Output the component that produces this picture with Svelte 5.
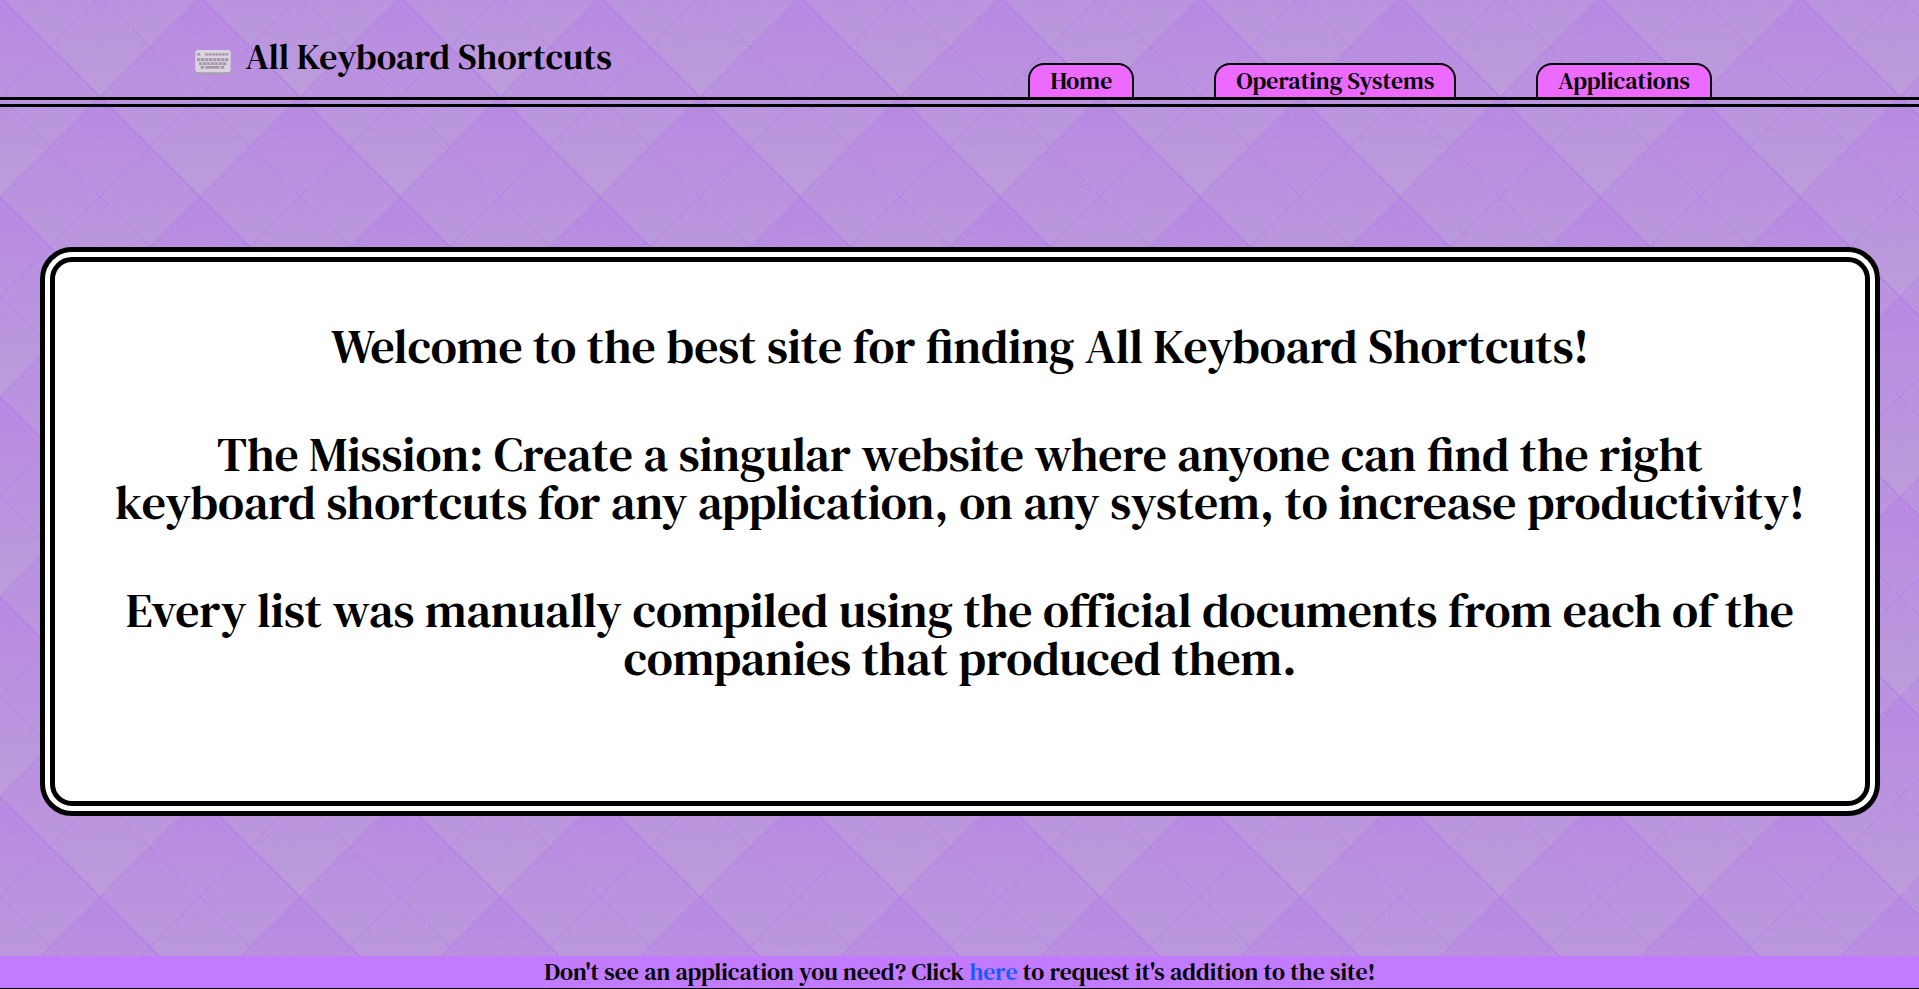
<script>
  const tabs = ['Home', 'Operating Systems', 'Applications'];
  const row = (y, h, start, end, count) => {
    const step = (end - start) / count;
    return Array.from({ length: count }, (_, i) => ({ x: start + i * step + 0.35, y, w: step - 0.7, h }));
  };
  const keys = [
    { x: 2.2, y: 3.2, w: 3, h: 2.4 },
    ...row(3.2, 2.4, 9.8, 33.6, 7),
    ...row(8.2, 2.9, 1.8, 33.8, 8),
    ...row(12.3, 2.8, 3.6, 31.6, 7),
    { x: 5.6, y: 16, w: 3.4, h: 2.7 },
    { x: 10.2, y: 16, w: 14.4, h: 2.7 },
    { x: 25.8, y: 16, w: 3.4, h: 2.7 }
  ];
  const tones = [
    { id: 'deep', from: '#b888e4', to: '#bb93df', at: [[0, 0], [200, 0], [100, 100]] },
    { id: 'mid', from: '#b98de2', to: '#bb98dd', at: [[50, 50], [150, 50], [50, 150], [150, 150], [50, -50], [150, -50]] },
    { id: 'pale', from: '#ba91e0', to: '#bc9cdb', at: [[100, 0], [0, 100], [200, 100], [0, -100], [200, -100]] }
  ];
  const diamond = ([x, y]) => `M${x} ${y}l50 50l-50 50l-50 -50z`;
</script>

<div class="page">
  <svg class="argyle" aria-hidden="true">
    <defs>
      {#each tones as t}
        <linearGradient id={t.id} x1="0" y1="0" x2="0" y2="1">
          <stop offset="0" stop-color={t.from} />
          <stop offset="1" stop-color={t.to} />
        </linearGradient>
      {/each}
      <pattern id="tile" width="200" height="200" patternUnits="userSpaceOnUse" patternTransform="translate(0 -3)">
        <rect width="200" height="200" fill="#bb93e0" />
        {#each tones as t}
          {#each t.at as p}<path d={diamond(p)} fill="url(#{t.id})" />{/each}
        {/each}
        <path d="M-10 110L110 -10M-10 210L210 -10M90 210L210 90M90 -10L210 110M-10 90L110 210" stroke="#b37be9" stroke-width="1" stroke-opacity=".8" fill="none" />
        <path d="M-10 -10L210 210" stroke="#b37be9" stroke-width="1.8" stroke-opacity=".8" />
      </pattern>
      <filter id="grain" x="0" y="0" width="100%" height="100%">
        <feTurbulence type="fractalNoise" baseFrequency=".55" numOctaves="2" seed="4" />
        <feColorMatrix values="0 0 0 0 .5  0 0 0 0 .5  0 0 0 0 .5  1.4 0 0 0 -.62" />
      </filter>
    </defs>
    <rect width="100%" height="100%" fill="url(#tile)" />
    <rect width="100%" height="100%" filter="url(#grain)" opacity=".2" />
  </svg>
  <header>
    <div class="brand">
      <svg class="keyboard" viewBox="0 0 36 25" aria-hidden="true">
        <rect x=".3" y="1" width="35.4" height="23.6" rx="2.4" fill="#a99bb4" />
        <rect x=".3" y="0" width="35.4" height="22.2" rx="2.4" fill="#dcd3e1" />
        {#each keys as k}<rect x={k.x} y={k.y} width={k.w} height={k.h} fill="#a198a8" />{/each}
      </svg>
      <span class="title">All Keyboard Shortcuts</span>
    </div>
    <nav>{#each tabs as t}<a class="tab">{t}</a>{/each}</nav>
  </header>
  <main>
    <section>
      <p>Welcome to the best site for finding All Keyboard Shortcuts!</p>
      <p>The Mission: Create a singular website where anyone can find the right<br />keyboard shortcuts for any application, on any system, to increase productivity!</p>
      <p>Every list was manually compiled using the official documents from each of the<br />companies that produced them.</p>
    </section>
  </main>
  <footer>Don't see an application you need? Click <a>here</a> to request it's addition to the site!</footer>
</div>

<style>
  :global(body) { background: #bb93e0; }
  .page { position: relative; isolation: isolate; height: 989px; display: flex; flex-direction: column; color: #000; font-family: 'DM Serif Text', 'Liberation Serif', serif; overflow: hidden; }
  .argyle { position: absolute; inset: 0; width: 100%; height: 100%; z-index: -1; }
  header { display: flex; justify-content: space-between; box-sizing: border-box; height: 107px; padding: 0 207px 0 195px; border-bottom: 10px double #000; }
  .brand { display: flex; align-items: flex-start; gap: 14.5px; }
  .keyboard { width: 36px; height: 25px; margin-top: 50px; }
  .title { font-size: 36px; line-height: 114px; height: 97px; }
  nav { display: flex; gap: 80px; align-items: flex-end; font-size: 24px; }
  .tab { box-sizing: border-box; min-width: 106px; height: 34px; padding: 2px 20px 0; border: 2px solid #000; border-bottom: 0; border-radius: 16px 16px 0 0; background: #ec6aff; line-height: 28px; white-space: nowrap; }
  main { flex: 1; padding: 140px 39px 140px 40px; }
  section { height: 539px; border: 15px double #000; border-radius: 32px; background: #fff; text-align: center; font-size: 48px; line-height: 48px; white-space: nowrap; }
  p { margin: 60px 0; }
  footer { height: 32px; line-height: 32px; padding-left: 1px; border-bottom: 1px solid #000; background: #c27aff; text-align: center; font-size: 24px; }
  footer a { color: #155dfc; }
</style>
